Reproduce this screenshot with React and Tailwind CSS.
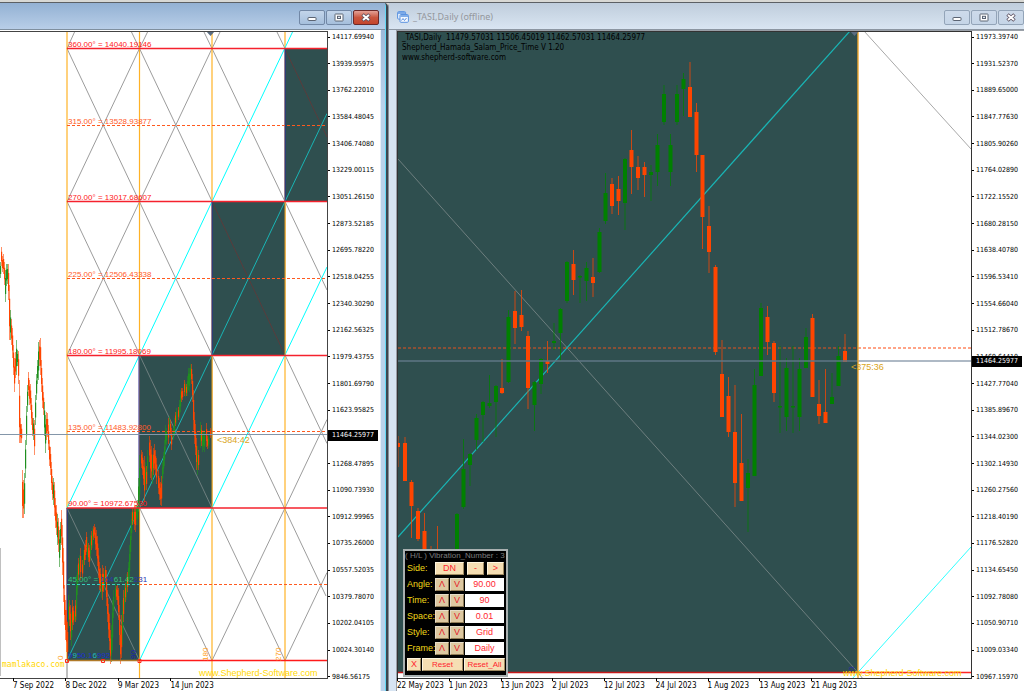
import React, { useState } from 'react';
import clsx from 'clsx';

const axisFont = "font-['DejaVu_Sans_Condensed','DejaVu_Sans',sans-serif]";
const panelFont = "font-['Liberation_Sans',Arial,sans-serif]";

const RED = '#ff4500';
const GREEN = '#008000';
const BOX = '#2f4f4f';
const AQUA = '#00ffff';
const AQUA_DIM = '#19b5b5';

const gridPrices = [
    '14117.69940', '13939.95975', '13762.22010', '13584.48045', '13406.74080', '13229.00115', '13051.26150',
    '12873.52185', '12695.78220', '12518.04255', '12340.30290', '12162.56325', '11979.43755', '11801.69790',
    '11623.95825', '11446.21860', '11268.47895', '11090.73930', '10912.99965', '10735.26000', '10557.52035',
    '10379.78070', '10202.04105', '10024.30140', '9846.56175',
];

const candlePrices = [
    '11973.39740', '11931.52370', '11889.65000', '11847.77630', '11805.90260', '11764.02890', '11722.15520',
    '11680.28150', '11638.40780', '11596.53410', '11554.66040', '11512.78670', '11469.64410', '11427.77040',
    '11385.89670', '11344.02300', '11302.14930', '11260.27560', '11218.40190', '11176.52820', '11134.65450',
    '11092.78080', '11050.90710', '11009.03340', '10967.15970',
];

// x, high, low, direction
const history = [
    [0, 262, 278, 1], [1, 247, 266, 0], [2, 256, 272, 0], [3, 254, 274, 0], [4, 262, 285, 0], [5, 270, 302, 1],
    [6, 264, 286, 1], [7, 264, 284, 1], [8, 264, 300, 0], [9, 285, 340, 0], [10, 310, 340, 1], [11, 319, 345, 0],
    [12, 328, 358, 0], [13, 345, 375, 0], [14, 358, 392, 0], [15, 352, 378, 0], [16, 340, 375, 1], [17, 350, 366, 1],
    [18, 351, 384, 0], [19, 380, 443, 0], [20, 418, 443, 0], [21, 424, 443, 0], [22, 470, 518, 0], [23, 480, 518, 0],
    [24, 473, 514, 1], [25, 440, 478, 1], [26, 406, 445, 1], [27, 385, 412, 1], [28, 372, 396, 0], [29, 380, 405, 0],
    [30, 384, 410, 0], [31, 398, 425, 0], [32, 412, 436, 0], [33, 418, 440, 1], [34, 420, 455, 0], [35, 395, 425, 1],
    [36, 374, 400, 1], [37, 360, 384, 1], [38, 342, 380, 1], [39, 340, 366, 0], [40, 338, 375, 0], [41, 360, 392, 0],
    [42, 378, 408, 0], [43, 392, 415, 0], [44, 402, 436, 1], [45, 415, 453, 1], [46, 412, 440, 0], [47, 413, 437, 0],
    [48, 425, 450, 0], [49, 440, 466, 0], [50, 447, 475, 0], [51, 462, 490, 0], [52, 476, 500, 0], [53, 478, 505, 1],
    [54, 482, 516, 0], [55, 498, 528, 0], [56, 505, 535, 0], [57, 514, 545, 1], [58, 518, 552, 0], [59, 530, 567, 1],
    [60, 522, 550, 1], [61, 510, 545, 0], [62, 525, 575, 0], [63, 548, 602, 0], [64, 585, 625, 0], [65, 600, 640, 0],
    [66, 610, 652, 0], [67, 622, 662, 0], [68, 595, 628, 1], [69, 600, 626, 0], [70, 605, 640, 0], [71, 612, 646, 1],
    [72, 600, 630, 0], [73, 606, 625, 0], [74, 612, 622, 1], [75, 600, 622, 0], [76, 575, 620, 1], [77, 565, 595, 1],
    [78, 558, 580, 0], [79, 555, 575, 1], [80, 548, 580, 0], [82, 560, 578, 0], [83, 550, 570, 1], [84, 545, 565, 0],
    [85, 540, 560, 0], [86, 532, 552, 0], [87, 540, 560, 1], [88, 543, 562, 0], [89, 545, 567, 0], [90, 535, 560, 1],
    [91, 531, 550, 0], [92, 528, 548, 1], [93, 526, 540, 0], [94, 524, 538, 0], [95, 527, 550, 0], [96, 530, 556, 0],
    [97, 536, 566, 0], [98, 548, 578, 0], [99, 562, 590, 0], [100, 568, 592, 0], [101, 575, 598, 1], [102, 565, 600, 0],
    [103, 568, 592, 0], [104, 570, 590, 1], [105, 566, 582, 0], [106, 570, 606, 0], [107, 590, 622, 0], [108, 604, 638, 0],
    [109, 614, 650, 0], [110, 630, 664, 0], [111, 625, 662, 1], [112, 600, 650, 1], [113, 590, 618, 1], [115, 583, 602, 1],
    [116, 586, 600, 0], [117, 585, 605, 0], [118, 588, 620, 0], [119, 605, 645, 0], [120, 625, 664, 0], [121, 615, 658, 0],
    [122, 600, 645, 1], [123, 590, 622, 0], [124, 585, 610, 1], [125, 583, 602, 0], [126, 574, 600, 1], [127, 572, 592, 0],
    [128, 562, 586, 1], [129, 545, 580, 1], [130, 528, 560, 1], [131, 512, 540, 1], [132, 508, 525, 0], [133, 508, 524, 1],
    [134, 506, 530, 0], [135, 505, 532, 0], [136, 505, 520, 1], [137, 500, 525, 1], [138, 478, 512, 1], [139, 455, 508, 1],
    [141, 450, 468, 0], [142, 452, 475, 0], [143, 460, 485, 0], [144, 456, 502, 0], [145, 462, 490, 1], [146, 466, 490, 0],
    [147, 450, 475, 1], [149, 436, 462, 0], [150, 440, 478, 0], [151, 446, 480, 0], [152, 455, 484, 1], [153, 448, 475, 0],
    [154, 444, 470, 0], [155, 450, 475, 0], [156, 458, 484, 0], [158, 470, 494, 0], [159, 478, 500, 0], [160, 482, 505, 0],
    [161, 476, 506, 0], [162, 462, 484, 1], [163, 452, 474, 1], [164, 440, 466, 1], [165, 425, 450, 1], [166, 428, 445, 1],
    [168, 418, 444, 0], [169, 416, 430, 1], [170, 420, 436, 0], [171, 428, 450, 0], [173, 425, 440, 1], [174, 418, 434, 1],
    [175, 412, 426, 0], [176, 408, 424, 1], [178, 407, 420, 0], [179, 400, 418, 1], [180, 390, 412, 1], [181, 388, 402, 0],
    [182, 388, 400, 0], [184, 380, 396, 0], [185, 382, 397, 1], [186, 384, 396, 0], [187, 376, 396, 1], [188, 368, 390, 1],
    [189, 368, 392, 1], [190, 364, 380, 1], [191, 364, 384, 0], [192, 374, 402, 0], [193, 390, 430, 0], [194, 412, 444, 0],
    [195, 424, 455, 0], [196, 438, 470, 0], [197, 446, 475, 1], [198, 450, 470, 0], [200, 422, 448, 1], [201, 425, 446, 0],
    [202, 430, 452, 1], [203, 432, 450, 1], [204, 430, 452, 1], [206, 423, 447, 0], [207, 436, 449, 0], [208, 434, 448, 1],
    [210, 428, 438, 0],
];

// x, high, body top, body bottom, low, direction
const candles = [
    [398, 436, 443, 447, 467, 0], [405, 437, 443, 481, 481, 0], [411.5, 480, 482, 506, 538, 0], [418, 508, 511, 539, 541, 0],
    [424.5, 513, 531, 560, 560, 0], [431, 546, 552, 560, 560, 0], [437.5, 526, 552, 560, 560, 0], [457, 513, 514, 556, 556, 1],
    [463.5, 439, 469, 507, 509, 1], [470, 453, 454, 465, 486, 1], [476.5, 414, 418, 440, 450, 1], [483, 401, 402, 415, 442, 1],
    [489.5, 375, 403, 406, 408, 1], [496, 385, 386, 402, 437, 1], [502, 359, 388, 393, 394, 0], [508.5, 310, 317, 382, 383, 1],
    [515, 291, 311, 328, 344, 0], [521.5, 290, 315, 327, 331, 0], [528, 331, 336, 388, 409, 0], [534.5, 381, 382, 405, 431, 1],
    [541, 358, 359, 384, 394, 1], [547.5, 341, 361, 364, 373, 0], [554, 323, 341, 343, 350, 1], [560.5, 308, 309, 333, 361, 1],
    [567, 261, 262, 301, 303, 1], [573.5, 250, 264, 280, 295, 0], [580, 275, 276, 277, 303, 1], [586.5, 262, 268, 281, 301, 1],
    [593, 258, 277, 283, 297, 0], [599.5, 228, 232, 272, 273, 1], [605.5, 173, 193, 221, 224, 1], [612, 178, 184, 206, 214, 0],
    [618.5, 176, 189, 201, 215, 0], [625, 158, 159, 203, 230, 1], [631.5, 130, 150, 167, 194, 0], [638, 156, 167, 178, 190, 0],
    [644.5, 162, 167, 175, 197, 0], [651, 165, 172, 175, 201, 1], [657.5, 134, 145, 172, 186, 1], [664, 85, 94, 122, 125, 1],
    [670.5, 134, 145, 172, 186, 1], [677, 85, 94, 122, 125, 1], [683.5, 73, 79, 89, 116, 1], [690, 62, 87, 117, 117, 0],
    [696.5, 103, 112, 155, 172, 0], [702.5, 155, 155, 217, 249, 0], [709, 206, 226, 252, 273, 0], [715.5, 265, 267, 352, 355, 0],
    [722, 340, 374, 417, 417, 0], [728.5, 377, 396, 432, 437, 0], [735, 385, 432, 483, 507, 0], [741.5, 414, 463, 501, 501, 0],
    [748, 459, 473, 488, 532, 1], [754.5, 369, 385, 476, 476, 1], [761, 303, 308, 376, 376, 1], [767.5, 306, 317, 342, 355, 0],
    [774, 341, 343, 393, 402, 0], [780, 346, 406, 407, 433, 1], [786.5, 358, 368, 417, 431, 1], [793, 346, 406, 407, 433, 1],
    [799.5, 358, 369, 417, 431, 1], [806, 328, 337, 368, 368, 1], [812.5, 314, 318, 397, 397, 0], [819, 380, 404, 416, 424, 0],
    [825.5, 369, 412, 423, 423, 0], [832, 373, 397, 404, 404, 1], [838.5, 346, 356, 386, 386, 1], [845, 334, 351, 362, 362, 0],
];

const greyLines = [
    [67, 48.5, 75, 31], [139.5, 48.5, 131, 31], [139.5, 48.5, 148, 31], [212, 48.5, 203.5, 31], [212, 48.5, 220.5, 31],
    [285, 48.5, 276.5, 31],
    [67, 48.5, 326, 596],
    [139.5, 48.5, 285, 355], [212, 48.5, 285, 201.5], [285, 201.5, 327, 290],
    [285, 355, 327, 443.5], [67, 201.5, 285, 660.5], [67, 355, 212, 660.5],
    [67, 201.5, 139.5, 48.5], [67, 355, 212, 48.5],
    [67, 508, 139.5, 660.5], [285, 508, 327, 419.5], [212, 660.5, 285, 508], [285, 660.5, 327, 572.5],
];

const levels = [
    { y: 48.5, text: '360.00° = 14040.19146', solid: true },
    { y: 125.5, text: '315.00° = 13528.93877' },
    { y: 201.5, text: '270.00° = 13017.68607', solid: true },
    { y: 278.5, text: '225.00° = 12506.43338' },
    { y: 355.5, text: '180.00° = 11995.18069', solid: true },
    { y: 431.5, text: '135.00° = 11483.92800' },
    { y: 508, text: '90.00° = 10972.67530', solid: true },
];

const arial = "'Liberation Sans', Arial, sans-serif";

function Watermark({ x }) {
    return <text x={x} y="676" fill="#ffd700" fontSize="9" fontFamily={arial}>www.Shepherd-Software.com</text>;
}

function GridChart() {
    return (
        <svg viewBox="0 32 327 646" preserveAspectRatio="xMinYMin slice" className="absolute inset-0 w-full h-full">
            {/* Diagonal grid */}
            {greyLines.map(([x1, y1, x2, y2], i) => (
                <line key={i} x1={x1} y1={y1} x2={x2} y2={y2} stroke="#9c9c9c" />
            ))}
            {[67, 139.5, 212, 285].map((x) => (
                <line key={x} x1={x} x2={x} y1="31" y2={x === 67 ? 660 : 680} stroke="#ffb226" strokeWidth="1.2" />
            ))}
            <line x1="67" x2="67" y1="661" y2="680" stroke="#808080" />

            {/* Filled squares */}
            <rect x="285" y="49" width="45" height="152.5" fill={BOX} />
            <rect x="212" y="201.5" width="73" height="153.5" fill={BOX} />
            <rect x="139.5" y="355" width="72.5" height="153" fill={BOX} />
            <rect x="67" y="508" width="72.5" height="152.5" fill={BOX} />
            <path d="M285 49L327 137M212 201.5L285 355" stroke="#5a3c3c" fill="none" />
            <path d="M139.5 355L212 508M67 508L139.5 660.5" stroke="#6e7f7f" fill="none" />

            <path
                d="M212 201.5L293 31M139.5 355L212 201.5M285 355L327 267M67 508L139.5 355M212 508L285 355M139.5 660.5L212 508"
                stroke={AQUA}
                fill="none"
            />
            <path d="M285 201.5L327 113.5M212 355L285 201.5M139.5 508L212 355M67 660.5L139.5 508" stroke={AQUA_DIM} fill="none" />
            <path d="M285 49V201M212 202V355M139 355V508M67 508V625" stroke="#2c2ca0" fill="none" />
            <path d="M285 202V355M212 355V508M139.5 508V660" stroke="#d99a2b" fill="none" />

            {/* Price history */}
            {history.map(([x, high, low, up]) => (
                <g key={x} fill={up ? '#1f8f1f' : RED}>
                    <rect x={x} y={high} width="1" height={low - high} opacity="0.6" />
                    <rect x={x} y={high + (low - high) * 0.25} width="1.2" height={(low - high) * 0.5} />
                </g>
            ))}

            {/* Angle levels */}
            {levels.map(({ y, text, solid }) => (
                <g key={text}>
                    <line
                        x1="67" x2="327" y1={y} y2={y}
                        stroke={solid ? '#f5222d' : '#ff5a1f'}
                        strokeWidth={solid ? 1.4 : 1}
                        strokeDasharray={solid ? undefined : '3 2'}
                    />
                    <text x="68" y={y - 2} fill={solid ? '#ff2020' : '#ff5a2a'} fontSize="8" fontFamily={arial}>{text}</text>
                </g>
            ))}
            <line x1="67" x2="139" y1="584.5" y2="584.5" stroke="#38d0c0" strokeDasharray="3 2" />
            <line x1="139" x2="327" y1="584.5" y2="584.5" stroke="#ff5a1f" strokeDasharray="3 2" />
            <text x="68" y="582" fontSize="8" fontFamily={arial} fill="#2fc47a">
                45.00° = <tspan fill="#2b35b0">104</tspan>61.42<tspan fill="#2b35b0">231</tspan>
            </text>
            <line x1="67" x2="139" y1="660.5" y2="660.5" stroke="#b07a28" strokeWidth="1.4" />
            <line x1="139" x2="327" y1="660.5" y2="660.5" stroke="#ff1a1a" strokeWidth="1.4" />
            <text x="68" y="658" fontSize="8" fontFamily={arial} fill="#1c2fd0">
                9<tspan fill="#20b8c0">9</tspan>50.1<tspan fill="#20b8c0">6</tspan>992
            </text>
            <path d="M65.5 659.5h3v3h-3zM101.5 659.5h3v3h-3zM138 659.5h3v3h-3z" fill="none" stroke="#ff2a1a" />

            <g fill="#ffa020" fontSize="8" fontFamily={arial}>
                <text transform="translate(63 660) rotate(-90)">0</text>
                <text transform="translate(136 659) rotate(-90)" fill="#1b1bb0">90</text>
                <text transform="translate(208 661) rotate(-90)">180</text>
                <text transform="translate(281 661) rotate(-90)">270</text>
            </g>

            <line x1="0" x2="327" y1="434.5" y2="434.5" stroke="#8496a9" />
            <line x1="0.5" x2="0.5" y1="548" y2="676" stroke="#c0c0c0" />
            <path d="M206 31h9l-4.500 5z" fill="#5a6c80" />
            <text x="217" y="443" fill="#daa520" fontSize="9" fontFamily={arial}>&lt;384:42</text>
            <text x="2" y="667" fill="#ffd700" fontSize="8" fontFamily="'DejaVu Sans Mono', monospace">mamlakaco.com</text>
            <Watermark x="199" />
        </svg>
    );
}

function CandleChart() {
    return (
        <svg viewBox="398 32 573 646" preserveAspectRatio="xMinYMin slice" className="absolute inset-0 w-full h-full">
            <rect x="398" y="31" width="460" height="641.5" fill={BOX} />
            <path d="M398 159L858 672.500" stroke="#6e7f7f" fill="none" />
            <path d="M864 31L971 149" stroke="#a8a8a8" fill="none" />
            <path d="M398 537L850 31" stroke={AQUA_DIM} strokeWidth="1.2" fill="none" />
            <path d="M852 679L971 547" stroke="#30ffff" fill="none" />
            <path d="M858 672.500L863 679" stroke="#969696" fill="none" />
            <line x1="398" x2="858" y1="348" y2="348" stroke="#a8522f" strokeWidth="1.4" strokeDasharray="3 2" />
            <line x1="858" x2="971" y1="348" y2="348" stroke="#ff8660" strokeWidth="1.4" strokeDasharray="3 2" />

            {candles.map(([x, high, top, bottom, low, up]) => (
                <g key={x} fill={up ? GREEN : RED}>
                    <rect x={x - 0.5} y={high} width="1" height={low - high} opacity="0.75" />
                    <rect x={x - 2} y={top} width="4" height={Math.max(bottom - top, 1.5)} />
                </g>
            ))}

            <line x1="398" x2="858" y1="361" y2="361" stroke="#5f7684" strokeWidth="1.4" />
            <line x1="858" x2="971" y1="361" y2="361" stroke="#93a2b2" strokeWidth="1.4" />
            <line x1="398" x2="858" y1="672.5" y2="672.5" stroke="#c61a1a" strokeWidth="1.4" />
            <line x1="858" x2="971" y1="672.5" y2="672.5" stroke="#ff2626" strokeWidth="1.4" />
            <line x1="858" x2="858" y1="31" y2="680" stroke="#f0a830" strokeWidth="1.4" />
            <path d="M850 31h9l-4.500 5z" fill="#5a6c80" />
            <text transform="translate(854 671) rotate(-90)" fill="#2c2ca0" fontSize="8" fontFamily={arial}>0</text>
            <text x="851" y="370" fill="#daa520" fontSize="9" fontFamily={arial}>&lt;375:36</text>
            <Watermark x="843" />
        </svg>
    );
}

function PriceAxis({ prices, price }) {
    const max = Number(prices[0]);
    const min = Number(prices[prices.length - 1]);
    const share = (max - price) / (max - min);

    return (
        <div className={clsx("relative row-span-2 bg-white text-black text-[7px] pb-2", axisFont)}>
            <ul className="h-full flex flex-col justify-between">
                {prices.map((label) => (
                    <li key={label} className="h-3 leading-3 flex items-center">
                        <span className="w-[2px] h-px bg-black mr-[2px]" />
                        {label}
                    </li>
                ))}
            </ul>
            <span
                className="absolute left-0 right-[2px] h-[11px] leading-[11px] pl-[4px] bg-black text-white"
                style={{ top: `calc((100% - 20px) * ${share} + 1px)` }}
            >
                {price.toFixed(5)}
            </span>
        </div>
    );
}

function DateAxis({ dates, className }) {
    return (
        <div className="bg-white min-w-0">
            <ul className={clsx("grid auto-cols-fr grid-flow-col text-black text-[8px] leading-[14px] whitespace-nowrap", axisFont, className)}>
                {dates.map((date) => (
                    <li key={date} className="relative min-w-0">
                        <span className="absolute left-0 -top-px w-px h-[3px] bg-black" />
                        {date}
                    </li>
                ))}
            </ul>
        </div>
    );
}

function CaptionButton({ label, active, danger, children }) {
    return (
        <button
            aria-label={label}
            className={clsx(
                "w-[26px] h-[15px] rounded-[2px] border flex items-center justify-center",
                danger
                    ? "border-[#6b2a2a] bg-linear-to-b from-[#e3a197] via-[#c9563f] via-50% to-[#c4452c]"
                    : active
                        ? "border-[#7288a6] bg-linear-to-b from-[#c3d5ea] to-[#a5bfdc]"
                        : "border-[#93a4b8] bg-linear-to-b from-[#cddaea] to-[#c5d5e7]"
            )}
        >
            <svg width="12" height="9" viewBox="0 0 12 9" fill="none">{children}</svg>
        </button>
    );
}

function CaptionButtons({ active }) {
    return (
        <div className="flex gap-px">
            <CaptionButton label="Minimize" active={active}>
                <rect x="2" y="4.500" width="8" height="3" rx="0.500" fill="#fff" stroke="#5b6473" />
            </CaptionButton>
            <CaptionButton label="Maximize" active={active}>
                <rect x="2" y="1" width="8" height="7" rx="0.500" fill="#fff" stroke="#5b6473" />
                <rect x="4.500" y="3.300" width="3" height="2.200" fill="#dfe8f3" stroke="#5b6473" />
            </CaptionButton>
            <CaptionButton label="Close" active={active} danger={active}>
                <path d="M2.500 1.500L9.500 7.500M9.500 1.500L2.500 7.500" stroke="#5b5060" strokeWidth="3.600" />
                <path d="M3 2L9 7M9 2L3 7" stroke="#fff" strokeWidth="2" />
            </CaptionButton>
        </div>
    );
}

function TinyButton({ className, ...props }) {
    return (
        <button
            className={clsx(
                "h-[13px] leading-[11px] bg-[#f5deb3] text-[#ff1f2f] border border-t-[#fff6e0] border-l-[#fff6e0] border-b-[#a08a60] border-r-[#a08a60] text-center",
                className
            )}
            {...props}
        />
    );
}

function SettingsPanel() {
    const [values, setValues] = useState({
        Angle: '90.00',
        Time: '90',
        Space: '0.01',
        Style: 'Grid',
        Frame: 'Daily',
    });

    return (
        <div className={clsx("absolute left-[5px] bottom-px w-[105px] h-[128px] bg-black border-2 border-[#a9b0b0] flex flex-col text-[9px]", panelFont)}>
            <h2 className="text-[8px] leading-[10px] text-[#7d7d7d] whitespace-nowrap">( H/L ) Vibration_Number : 3</h2>
            <div className="flex flex-col gap-[3px] pt-px pl-[2px]">
                <div className="flex items-center">
                    <span className="w-[28px] leading-[13px] text-[#f0d818]">Side:</span>
                    <TinyButton className="w-[29px] mr-[3px]">DN</TinyButton>
                    <TinyButton className="w-[17px] mr-[3px]">-</TinyButton>
                    <TinyButton className="w-[17px]">&gt;</TinyButton>
                </div>
                {Object.keys(values).map((name) => (
                    <div key={name} className="flex items-center">
                        <label htmlFor={name} className="w-[28px] shrink-0 leading-[13px] text-[#f0d818]">{name}:</label>
                        <TinyButton aria-label={`${name} up`} className="w-[14px] mr-px opacity-90">Λ</TinyButton>
                        <TinyButton aria-label={`${name} down`} className="w-[14px] mr-px opacity-90">V</TinyButton>
                        <input
                            id={name}
                            type="text"
                            value={values[name]}
                            onChange={(e) => setValues({ ...values, [name]: e.target.value })}
                            className="w-[39px] h-[13px] bg-white text-[#ff1f2f] text-center focus:outline-none"
                        />
                    </div>
                ))}
                <div className="flex gap-px text-[8px]">
                    <TinyButton className="w-[14px] text-[9px]">X</TinyButton>
                    <TinyButton className="w-[41px]">Reset</TinyButton>
                    <TinyButton className="w-[41px]">Reset_All</TinyButton>
                </div>
            </div>
        </div>
    );
}

export default function App() {
    return (
        <div className="h-screen flex flex-col bg-[#d8d8d4] overflow-hidden">
            <div className="h-[3px] shrink-0 border-b border-[#5c6064]" />
            <main className="flex-1 min-h-0 grid grid-cols-[97fr_159fr]">
                {/* Active window */}
                <section className="min-w-0 min-h-0 flex flex-col border-r-2 border-[#3c4650] rounded-tr-[4px] bg-linear-to-b from-[#93b1d3] to-[#b9d2eb] to-15% shadow-[inset_-1px_0_0_#63d8f5]">
                    <header className="h-[27px] shrink-0 flex items-center justify-end pr-[6px] pt-[2px] mr-px bg-linear-to-b from-[#93b1d3] to-[#b8cee8] border-b border-[#7f8f9f]">
                        <CaptionButtons active />
                    </header>
                    <div className="flex-1 min-h-0 mr-[5px] border-t border-white border-r border-r-[#e6eef8] grid grid-cols-[minmax(0,1fr)_52px] grid-rows-[minmax(0,1fr)_12px]">
                        <div className="relative bg-white border-t border-r border-b border-[#444] overflow-hidden">
                            <GridChart />
                        </div>
                        <PriceAxis prices={gridPrices} price={11464.25977} />
                        <DateAxis dates={['7 Sep 2022', '8 Dec 2022', '9 Mar 2023', '14 Jun 2023']} className="w-[64%] ml-[13px]" />
                    </div>
                </section>

                {/* Offline window */}
                <section className="min-w-0 min-h-0 flex flex-col border-l border-[#8a9098] rounded-tl-[4px] bg-[#d7e4f2]">
                    <header className="h-[27px] shrink-0 flex items-center justify-between pl-[8px] pt-[2px] bg-linear-to-b from-[#bfcddc] to-[#d9e5f2] border-b border-[#8c96a2]">
                        <div className="flex items-center gap-[4px]">
                            <svg width="12" height="12" viewBox="0 0 12 12" fill="none">
                                <rect x="0.600" y="0.600" width="8" height="7.500" rx="1" fill="#e6f1ff" stroke="#5b93e0" />
                                <path d="M1 2h7.500" stroke="#5b93e0" strokeWidth="1.500" />
                                <rect x="3" y="3.500" width="8.400" height="7.800" rx="1" fill="#f4f9ff" stroke="#5b93e0" />
                                <path d="M3.500 5h7.500" stroke="#5b93e0" strokeWidth="1.500" />
                                <path d="M4.500 9.500l1.500-2 1.500 2 2-2.500" stroke="#4f86d8" strokeWidth="0.900" />
                            </svg>
                            <h1 className="text-[9px] leading-3 text-[#94979c] font-['Noto_Sans',sans-serif]">_TASI,Daily (offline)</h1>
                        </div>
                        <CaptionButtons />
                    </header>
                    <div className="flex-1 min-h-0 ml-[7px] border-l border-t border-[#9aa0a8] grid grid-cols-[minmax(0,1fr)_52px] grid-rows-[minmax(0,1fr)_12px] bg-white">
                        <div className="relative bg-white border border-[#333] overflow-hidden">
                            <CandleChart />
                            <div className={clsx("absolute left-[4px] top-px text-[8px] leading-[10px] text-black whitespace-pre", axisFont)}>
                                <p>_TASI,Daily  11479.57031 11506.45019 11462.57031 11464.25977</p>
                                <p>Shepherd_Hamada_Salam_Price_Time V 1.20</p>
                                <p>www.shepherd-software.com</p>
                            </div>
                            <SettingsPanel />
                        </div>
                        <PriceAxis prices={candlePrices} price={11464.25977} />
                        <DateAxis
                            dates={['22 May 2023', '1 Jun 2023', '13 Jun 2023', '2 Jul 2023', '12 Jul 2023', '24 Jul 2023', '1 Aug 2023', '13 Aug 2023', '21 Aug 2023']}
                            className="w-[81%]"
                        />
                    </div>
                </section>
            </main>
        </div>
    );
}
